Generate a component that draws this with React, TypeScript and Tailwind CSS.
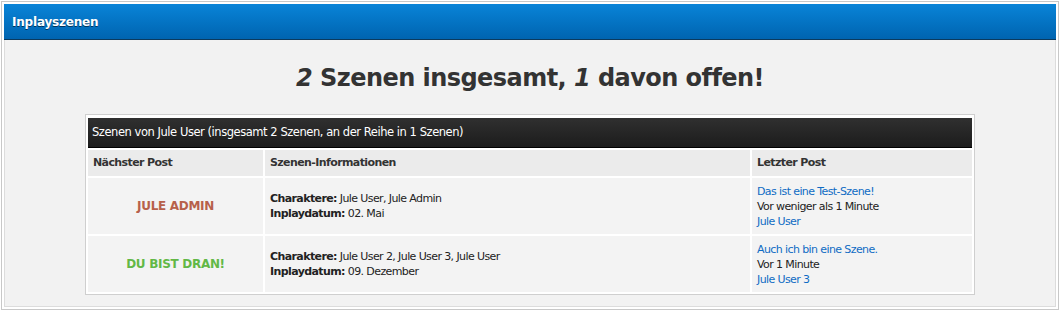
const font = { fontFamily: '"DejaVu Sans", Verdana, sans-serif' };

type Scene = {
  next: string;
  nextColor: string;
  chars: string;
  date: string;
  title: string;
  when: string;
  by: string;
};

const scenes: Scene[] = [
  {
    next: "JULE ADMIN",
    nextColor: "text-[#b7604a]",
    chars: "Jule User, Jule Admin",
    date: "02. Mai",
    title: "Das ist eine Test-Szene!",
    when: "Vor weniger als 1 Minute",
    by: "Jule User",
  },
  {
    next: "DU BIST DRAN!",
    nextColor: "text-[#62b846]",
    chars: "Jule User 2, Jule User 3, Jule User",
    date: "09. Dezember",
    title: "Auch ich bin eine Szene.",
    when: "Vor 1 Minute",
    by: "Jule User 3",
  },
];

export default function App() {
  return (
    <div className="w-[1063px] h-[313px] bg-white pt-px pl-px" style={font}>
      <div className="w-[1058px] h-[309px] border border-[#c8c8c8] bg-white p-[2px] flex flex-col">
        {/* blue title bar */}
        <div className="h-[36px] bg-gradient-to-b from-[#0a84d8] to-[#0064b0] border-b border-[#0b3a5e] flex items-center px-2">
          <span className="text-white text-[12px] font-bold tracking-[-0.2px] [text-shadow:0_1px_0_#00345c]">
            Inplayszenen
          </span>
        </div>

        <div className="flex-1 bg-[#f2f2f2] border-x border-b border-[#dcdcdc] flex flex-col items-center">
          <h1 className="mt-[22px] text-[24px] leading-[32px] font-bold text-[#333] tracking-[-0.55px]">
            <i>2</i> Szenen insgesamt, <i>1</i> davon offen!
          </h1>

          <div className="mt-[20px] w-[890px] border border-[#cfcfcf] bg-white px-[2px] pt-[3px] pb-[2px] text-[11px] tracking-[-0.6px] text-[#333]">
            <div className="h-[30px] bg-gradient-to-b from-[#303030] to-[#1c1c1c] border-b border-black flex items-center px-[4px] text-white text-[11.5px] tracking-[-0.45px]">
              Szenen von Jule User (insgesamt 2 Szenen, an der Reihe in 1 Szenen)
            </div>

            <div className="mt-[2px] grid grid-cols-[175px_485px_220px] gap-[2px]">
              <div className="h-[26px] bg-[#ebebeb] px-[5px] flex items-center font-bold">Nächster Post</div>
              <div className="h-[26px] bg-[#ebebeb] px-[5px] flex items-center font-bold">Szenen-Informationen</div>
              <div className="h-[26px] bg-[#ebebeb] px-[5px] flex items-center font-bold">Letzter Post</div>

              {scenes.map((s) => (
                <>
                  <div key={s.next + "a"} className={`h-[56px] bg-[#f3f3f3] flex items-center justify-center font-bold text-[12px] tracking-[-0.3px] ${s.nextColor}`}>
                    {s.next}
                  </div>
                  <div key={s.next + "b"} className="h-[56px] bg-[#f3f3f3] px-[5px] flex flex-col justify-center leading-[15px] text-[#222]">
                    <div>
                      <b>Charaktere:</b> {s.chars}
                    </div>
                    <div>
                      <b>Inplaydatum:</b> {s.date}
                    </div>
                  </div>
                  <div key={s.next + "c"} className="h-[56px] bg-[#f3f3f3] px-[5px] flex flex-col justify-center leading-[15px] text-[#222]">
                    <a className="text-[#0f6bc4]">{s.title}</a>
                    <span>{s.when}</span>
                    <a className="text-[#0f6bc4]">{s.by}</a>
                  </div>
                </>
              ))}
            </div>
          </div>
        </div>
      </div>
    </div>
  );
}
